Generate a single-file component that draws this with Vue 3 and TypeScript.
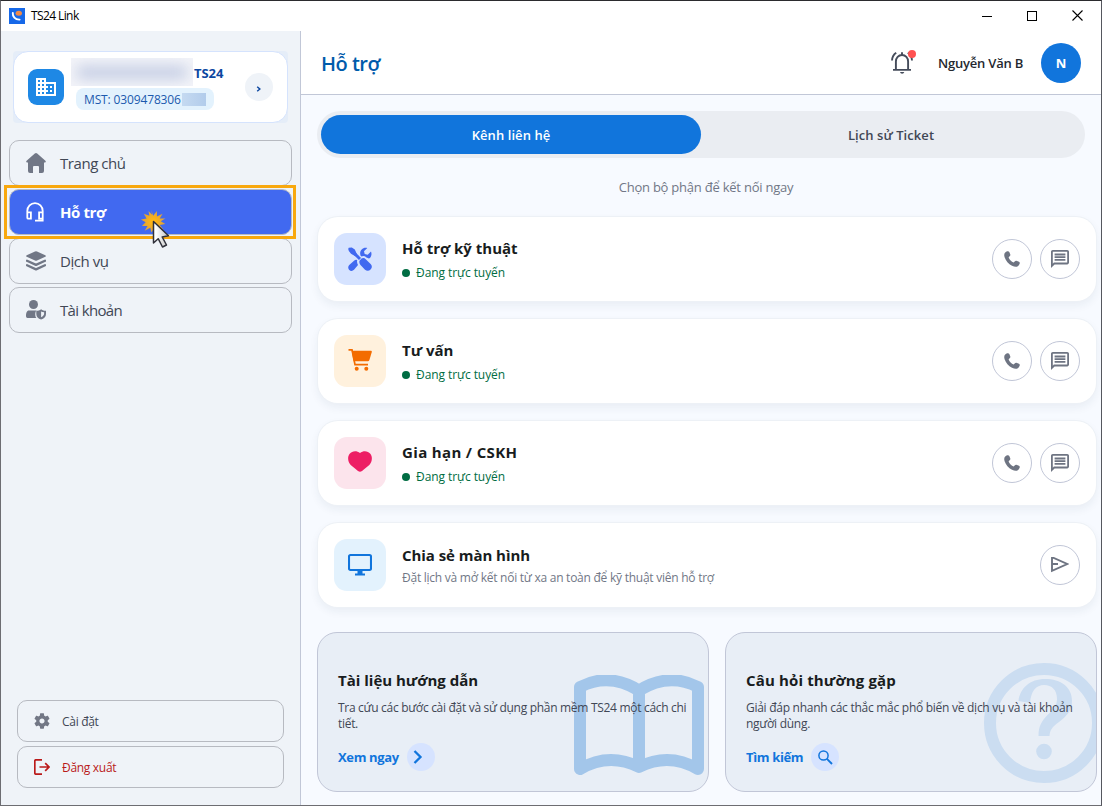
<script setup lang="ts">
import { ref } from 'vue'

interface NavItem { id: string; label: string }
interface Channel { id: string; title: string; note: string; online: boolean; actions: string[] }

const active = ref('support')
const tab = ref('channels')

const nav: NavItem[] = [
  { id: 'home', label: 'Trang chủ' },
  { id: 'support', label: 'Hỗ trợ' },
  { id: 'services', label: 'Dịch vụ' },
  { id: 'account', label: 'Tài khoản' },
]

const channels: Channel[] = [
  { id: 'tech', title: 'Hỗ trợ kỹ thuật', note: 'Đang trực tuyến', online: true, actions: ['call', 'chat'] },
  { id: 'sales', title: 'Tư vấn', note: 'Đang trực tuyến', online: true, actions: ['call', 'chat'] },
  { id: 'care', title: 'Gia hạn / CSKH', note: 'Đang trực tuyến', online: true, actions: ['call', 'chat'] },
  { id: 'screen', title: 'Chia sẻ màn hình', note: 'Đặt lịch và mở kết nối từ xa an toàn để kỹ thuật viên hỗ trợ', online: false, actions: ['send'] },
]
</script>

<template>
  <div class="window">
    <header class="titlebar">
      <svg class="app-logo" viewBox="0 0 16 16">
        <rect width="16" height="16" fill="#1668e8" />
        <path d="M3.800 5C3.500 8.300 6 11.800 10.600 11.600" fill="none" stroke="#fff" stroke-width="1.900" stroke-linecap="round" />
        <ellipse cx="9.800" cy="5.200" rx="3.200" ry="2.500" fill="#f08a48" />
      </svg>
      <span class="app-name">TS24 Link</span>
      <div class="controls">
        <svg width="10" height="10" viewBox="0 0 10 10" shape-rendering="crispEdges"><rect y="5" width="10" height="1" /></svg>
        <svg width="10" height="10" viewBox="0 0 10 10" shape-rendering="crispEdges"><rect x=".5" y=".5" width="9" height="9" fill="none" stroke="#000" /></svg>
        <svg width="11" height="11" viewBox="0 0 11 11"><path d="M.5.5l10 10M10.500.5l-10 10" stroke="#000" stroke-width="1.100" /></svg>
      </div>
    </header>

    <div class="body">
      <aside class="sidebar">
        <section class="company-wrap">
          <div class="company">
            <div class="company-icon">
              <svg width="24" height="24" viewBox="0 0 24 24" fill="#fff"><path d="M12 7V3H2v18h20V7H12zM6 19H4v-2h2v2zm0-4H4v-2h2v2zm0-4H4V9h2v2zm0-4H4V5h2v2zm4 12H8v-2h2v2zm0-4H8v-2h2v2zm0-4H8V9h2v2zm0-4H8V5h2v2zm10 12h-8v-2h2v-2h-2v-2h2v-2h-2V9h8v10zm-2-8h-2v2h2v-2zm0 4h-2v2h2v-2z" /></svg>
            </div>
            <div class="company-info">
              <div class="company-name"><span class="redacted"><i></i></span><b>TS24</b></div>
              <div class="tax"><span>MST: 0309478306</span><i></i></div>
            </div>
            <button class="company-go">
              <svg width="6" height="6" viewBox="0 0 6 6"><path d="M1.200.8L3.800 3 1.200 5.200" fill="none" stroke="#0d47a1" stroke-width="1.500" /></svg>
            </button>
          </div>
        </section>

        <nav class="nav">
          <button v-for="item in nav" :key="item.id" class="nav-item" :class="[item.id, { active: active === item.id }]" @click="active = item.id">
            <svg v-if="item.id === 'home'" class="nav-icon" viewBox="0 0 20 20">
              <path d="M8.800.5Q10-.4 11.200.5L19.400 7.800Q20.400 9.300 18.900 9.600H18V18Q18 20 16 20H13V14Q13 13 12 13H8Q7 13 7 14V20H4Q2 20 2 18V9.600H1.100Q-.4 9.300.6 7.800Z" fill="currentColor" />
            </svg>
            <svg v-else-if="item.id === 'support'" class="nav-icon headset" viewBox="0 0 20 20">
              <path d="M1.300 15V9a7.700 7.900 0 0 1 15.400 0V18.700H9M1.300 10.400H4.900V16.700H2.300Q1.300 16.700 1.300 15.700ZM16.700 10.400H13.100V16.700H16.700" fill="none" stroke="currentColor" stroke-width="1.800" />
            </svg>
            <svg v-else-if="item.id === 'services'" class="nav-icon" viewBox="0 0 20 20">
              <path d="M9 .4Q10-.1 11 .4L19.300 4.200Q20.500 5 19.300 5.800L11 9.600Q10 10 9 9.600L.7 5.800Q-.5 5 .7 4.200Z" fill="currentColor" />
              <path d="M1 9.800L10 13.900 19 9.800M1 14.200L10 18.400 19 14.200" fill="none" stroke="currentColor" stroke-width="2.300" stroke-linecap="round" stroke-linejoin="round" />
            </svg>
            <svg v-else class="nav-icon" viewBox="0 0 20 20" fill="currentColor">
              <circle cx="7.500" cy="4.500" r="4.500" /><path d="M3 10.500h7.500C9.200 11.500 9 14.500 9.500 16.500c.3.700.6 1.200 1 1.500H1.500Q0 18 0 16.300C0 13 .7 10.500 3 10.500Z" />
              <path fill-rule="evenodd" d="M15.100 9.200c1.500 1.300 2.900 1.500 4.900 1.500v3.200c0 2.800-2 4.500-4.900 5.700-2.900-1.200-4.800-2.900-4.800-5.700v-3.200c2 0 3.400-.2 4.800-1.500ZM15.100 11.500v5.800c2-1 3-2 3-3.700v-1.300c-1.200 0-2.200-.200-3-.8Z" />
            </svg>
            <span>{{ item.label }}</span>
          </button>
          <div class="focus-frame"></div>
          <svg class="pointer" width="30" height="39" viewBox="0 0 30 39">
            <defs>
              <linearGradient id="ptr"><stop offset=".15" stop-color="#fff" /><stop offset="1" stop-color="#c4c4c4" /></linearGradient>
              <radialGradient id="burst"><stop offset=".2" stop-color="#ffb515" /><stop offset="1" stop-color="#d9a040" /></radialGradient>
            </defs>
            <path d="M12 0l2 6 4-5v6l6-3-3 5 6 0-5 3 5 3-6 1 4 5-6-2 0 5-4-4-3 4-1-5-6 3 3-5-6 0 4-4-5-3 6-1-3-5 6 2-1-5 4 4Z" transform="translate(-1 0) scale(.94)" fill="url(#burst)" />
            <path d="M12.500 11.500V33l4.700-4.300 4.300 8.300 4-2-4.300-8 6.300-1.200Z" fill="url(#ptr)" stroke="#30313b" stroke-width="1.500" stroke-linejoin="round" />
          </svg>
        </nav>

        <div class="bottom">
          <button class="low-item">
            <svg width="16" height="16" viewBox="2 2 20 20" fill="#727785"><path d="M19.140 12.940c.04-.3.060-.610.060-.940 0-.320-.020-.640-.070-.940l2.030-1.580c.180-.140.230-.410.120-.610l-1.920-3.320c-.120-.220-.370-.290-.590-.220l-2.390.960c-.500-.380-1.030-.700-1.620-.940l-.360-2.540c-.040-.240-.240-.410-.480-.410h-3.840c-.240 0-.430.170-.470.410l-.360 2.540c-.590.240-1.130.570-1.620.940l-2.390-.960c-.220-.080-.470 0-.590.220L2.740 8.870c-.120.210-.080.470.120.610l2.030 1.580c-.050.300-.090.630-.090.940s.020.640.070.940l-2.030 1.580c-.180.140-.230.410-.120.610l1.920 3.320c.120.220.370.290.590.220l2.390-.960c.500.380 1.030.700 1.620.940l.360 2.540c.050.240.240.410.480.410h3.840c.240 0 .440-.170.470-.410l.360-2.540c.590-.240 1.130-.560 1.620-.940l2.390.960c.220.080.470 0 .590-.220l1.920-3.320c.120-.220.070-.470-.120-.610l-2.010-1.580zM12 15.200c-1.800 0-3.200-1.400-3.200-3.200s1.400-3.200 3.200-3.200 3.200 1.400 3.200 3.200-1.400 3.200-3.200 3.200z" /></svg>
            <span>Cài đặt</span>
          </button>
          <button class="low-item logout">
            <svg width="16" height="16" viewBox="0 0 16 16" fill="none" stroke="#ba1a1a" stroke-width="1.700"><path d="M8 .8H2Q.8.8.8 2v12q0 1.200 1.200 1.200H8M5.500 8H14.500M11.200 4.200L15 8l-3.800 3.800" /></svg>
            <span>Đăng xuất</span>
          </button>
        </div>
      </aside>

      <main class="main">
        <header class="topbar">
          <h1>Hỗ trợ</h1>
          <div class="user">
            <div class="bell">
              <svg width="22" height="24" viewBox="0 0 22 24">
                <path d="M4.900 18.500V10.500C4.900 6.800 7.500 4 11 4s6.100 2.800 6.100 6.500V18.500M2 18.900H20M11 4V1.300M1 9.500C1.200 6 2.700 3.500 5.200 1.800M21 9.500C20.800 6 19.300 3.500 16.800 1.800" fill="none" stroke="#454c5b" stroke-width="1.900" />
                <path d="M9 21h4.300a2.200 2.200 0 0 1-4.300 0Z" fill="#454c5b" />
              </svg>
              <i></i>
            </div>
            <span class="user-name">Nguyễn Văn B</span>
            <span class="avatar">N</span>
          </div>
        </header>

        <div class="content">
          <div class="tabs">
            <button class="t1" :class="{ on: tab === 'channels' }" @click="tab = 'channels'"><span>Kênh liên hệ</span></button>
            <button class="t2" :class="{ on: tab === 'history' }" @click="tab = 'history'"><span>Lịch sử Ticket</span></button>
          </div>
          <p class="hint">Chọn bộ phận để kết nối ngay</p>

          <div class="channels">
            <article v-for="c in channels" :key="c.id" class="channel" :class="c.id">
              <div class="tile">
                <svg v-if="c.id === 'tech'" width="24" height="24" viewBox="0 0 24 24">
                  <path d="M2.700 2.700L12 12" stroke="#4169f0" stroke-width="3" />
                  <path d="M.7.8L3.800.5 6.800 2.500 8.400 6 9.200 7.500 7.300 9.300 3 6.700Q-.8 3 .7.8Z" fill="#4169f0" />
                  <path d="M11.500 13.700L13.500 11.500Q16 10.300 18 12.500L22.600 17Q25 19.500 22.800 22.200 20 25 17 22.700L12.500 18Q10.800 16 11.500 13.700Z" fill="#4169f0" />
                  <path d="M9.300 12.900Q7.500 12.200 6.300 13.400L1.500 17.800Q-.8 20 1 22.700 3.600 25 6 22.800L10 17.900Q8.500 15.300 9.300 12.900Z" fill="#4169f0" />
                  <path d="M12.500 8.500C11 3.800 14.600-.3 19.300.9L16 4.200 16.700 7 19.700 7.700 23 4.500C24.300 7.800 22.700 11 21 11.600L18.500 10.400Q15.800 8 13.500 9.500Z" fill="#4169f0" />
                </svg>
                <svg v-else-if="c.id === 'sales'" width="24" height="24" viewBox="0 1 24 24">
                  <path d="M.5 1.900H4L7 16.600H20" fill="none" stroke="#f36c00" stroke-width="1.700" />
                  <path d="M3.700 2.800H23Q24 2.800 23.800 4L21.400 12Q21 13.300 19.800 13.300H5.600Z" fill="#f36c00" />
                  <circle cx="8.700" cy="20.800" r="2" fill="#f36c00" /><circle cx="18.300" cy="20.800" r="2" fill="#f36c00" />
                </svg>
                <svg v-else-if="c.id === 'care'" width="24" height="24" viewBox="0 1.500 24 24">
                  <path d="M12 3.500C8.500.8 4 1.400 1.700 4.300-.8 7.300-.2 12.200 2.700 15.500L10 21.500Q12 23 14 21.500l7.300-6c2.900-3.300 3.500-8.200 1-11.200C20 1.400 15.500.8 12 3.500Z" fill="#ed1e64" />
                </svg>
                <svg v-else width="24" height="24" viewBox="0 1 24 24">
                  <rect x="1" y="3" width="22" height="15" rx="1.400" fill="none" stroke="#1175dc" stroke-width="2.100" /><path d="M9.500 18h5v3.500H17V23.500H7V21.500h2.500Z" fill="#1175dc" />
                </svg>
              </div>
              <div class="info">
                <h2>{{ c.title }}</h2>
                <p :class="c.online ? 'status' : 'desc'"><i v-if="c.online"></i><span>{{ c.note }}</span></p>
              </div>
              <div class="actions">
                <button v-for="a in c.actions" :key="a">
                  <svg v-if="a === 'call'" width="16" height="16" viewBox="0 0 16 16"><path d="M1.200 1.600C2.600.2 4.600-.3 5.300 1L6.300 3.600C6.700 4.800 5 5.600 4.600 6.400 5.300 8.400 7.600 10.600 9.600 11.400 10.400 11 11.200 9.400 12.400 9.800L15 10.800C16.300 11.500 15.800 13.400 14.400 14.800 13.400 15.900 11 16.200 8 14.800 4.500 13 1.800 9.800.6 6.200-.1 4 .2 2.600 1.200 1.600Z" fill="#6e7482" /></svg>
                  <svg v-else-if="a === 'chat'" width="18" height="18" viewBox="2 2 20 20"><path d="M4 4h16v12H5.170L4 17.170V4m0-2c-1.100 0-1.990.9-1.990 2L2 22l4-4h14c1.100 0 2-.9 2-2V4c0-1.100-.9-2-2-2H4zm2 10h12v2H6v-2zm0-3h12v2H6V9zm0-3h12v2H6V6z" fill="#6e7482" /></svg>
                  <svg v-else width="18" height="16" viewBox="0 1 18 16"><path d="M1 1.200L16.200 8 1 14.800ZM1 8H7" fill="none" stroke="#6e7482" stroke-width="1.900" /></svg>
                </button>
              </div>
            </article>
          </div>

          <div class="help">
            <article class="help-card docs">
              <svg class="art book" width="130" height="101" viewBox="0 0 130 101">
                <path d="M6 94V12Q35-3 65 15.500V92Q35 77 6 94ZM65 15.500Q95-3 124 12V94Q95 77 65 92" fill="none" stroke="#a3c6ea" stroke-width="12" stroke-linejoin="round" />
              </svg>
              <h2>Tài liệu hướng dẫn</h2>
              <p>Tra cứu các bước cài đặt và sử dụng phần mềm TS24 một cách chi<br>tiết.</p>
              <a><span>Xem ngay</span><i><svg width="10" height="14" viewBox="0 0 10 14"><path d="M1.500 1L7.500 7l-6 6" fill="none" stroke="#1175dc" stroke-width="2.300" /></svg></i></a>
            </article>
            <article class="help-card faq">
              <svg class="art question" width="120" height="120" viewBox="0 0 120 120">
                <circle cx="60" cy="60" r="54" fill="none" stroke="#cbddf1" stroke-width="12" />
                <path d="M34.500 38C36 25 46 16 61 16c16 0 27 8 27 22 0 9-5 15-13 21-7 5-9 8-9.500 14H54.500c0-10 3-15 10-22 6-6 8.500-9 8.500-15 0-9-5-14-13-14-8 0-13 6-14 18Z" fill="#cbddf1" />
                <circle cx="60" cy="88.500" r="7.800" fill="#cbddf1" />
              </svg>
              <h2>Câu hỏi thường gặp</h2>
              <p>Giải đáp nhanh các thắc mắc phổ biến về dịch vụ và tài khoản<br>người dùng.</p>
              <a><span>Tìm kiếm</span><i><svg width="15" height="15" viewBox="0 0 15 15"><circle cx="5.500" cy="5.500" r="4.600" fill="none" stroke="#1175dc" stroke-width="1.500" /><path d="M8.700 8.700l5.300 5.300" stroke="#1175dc" stroke-width="1.900" /></svg></i></a>
            </article>
          </div>
        </div>
      </main>
    </div>
  </div>
</template>

<style>
html, body { margin: 0; overflow: hidden; }
</style>

<style scoped>
* { box-sizing: border-box; }
.window { width: 1102px; height: 806px; display: flex; flex-direction: column; background: #fff; border: 1px solid #6d6d72; border-top-color: #2b2b2e; border-right-color: #55575e; font-family: "Open Sans", "Noto Sans", sans-serif; color: #181c23; overflow: hidden; }
button { font: inherit; letter-spacing: inherit; margin: 0; padding: 0; border: 0; background: none; color: inherit; }
h1, h2, p { margin: 0; }
svg { display: block; flex: none; }
span, h1, h2, p { white-space: nowrap; }
.titlebar { height: 30px; flex: none; display: flex; align-items: center; padding: 0 18px 1px 8px; color: #000; }
.app-logo { width: 16px; height: 16px; margin-right: 6px; }
.app-name { font-size: 12px; letter-spacing: -.6px; }
.controls { margin-left: auto; display: flex; align-items: center; gap: 35px; }
.body { flex: 1; display: flex; min-height: 0; }
.sidebar { width: 300px; flex: none; background: #eff3f8; border-right: 1px solid #c1c7d7; display: flex; flex-direction: column; padding: 20px 8px 17px 8px; }
.company-wrap { margin: 0 4px; background: #e5edf8; height: 72px; border-radius: 4px; }
.company { height: 72px; background: #fff; border: 1px solid #d5e3fd; border-radius: 15px; display: flex; align-items: center; padding: 0 14px; }
.company-icon { width: 36px; height: 36px; border-radius: 9px; background: #1e88e5; display: flex; align-items: center; justify-content: center; }
.company-info { margin-left: 7px; height: 72px; padding-top: 7px; }
.company-name { display: flex; height: 28px; align-items: center; color: #0d47a1; font-size: 13px; }
.company-name b { letter-spacing: -.05px; margin-left: 1px; padding-top: 1px; }
.redacted { width: 122px; height: 28px; background: #f3f4f9; overflow: hidden; display: flex; align-items: center; justify-content: center; }
.redacted i { width: 112px; height: 13px; border-radius: 6px; background: #c3cce3; filter: blur(7px); }
.tax { margin: 2px 0 0 5px; height: 22px; width: 138px; border-radius: 8px; background: #e3f2fd; color: #1c5aae; font-size: 12px; display: flex; align-items: center; padding-left: 8px; }
.tax span { width: 98px; letter-spacing: -.14px; }
.tax i { width: 24px; height: 13px; background: linear-gradient(90deg, #c5daf1, #b2cceb); }
.company-go { width: 28px; height: 28px; border-radius: 50%; background: #eff3f8; margin-left: auto; padding-top: 3px; display: flex; align-items: center; justify-content: center; }
.nav { position: relative; display: flex; flex-direction: column; gap: 3px; margin-top: 17px; }
.nav-item { height: 46px; border: 1px solid #b7bac1; border-radius: 10px; display: flex; align-items: center; padding-left: 16px; color: #414755; font-size: 15px; letter-spacing: -.45px; text-align: left; }
.nav-icon { width: 20px; height: 20px; margin-right: 14px; color: #717786; }
.nav-item.active { background: #4169f0; color: #fff; font-weight: 700; letter-spacing: -.4px; }
.nav-item.active .nav-icon { color: #fff; }
.nav-item.account { letter-spacing: -.65px; }
.focus-frame { position: absolute; left: -5px; top: 45px; width: 292px; height: 54px; border: 3px solid #f8a80e; }
.pointer { position: absolute; left: 132px; top: 70px; overflow: visible; }
.bottom { margin: auto 8px 0; display: flex; flex-direction: column; gap: 4px; }
.low-item { height: 42px; border: 1px solid #b7bac1; border-radius: 10px; display: flex; align-items: center; padding-left: 16px; gap: 12px; font-size: 12px; letter-spacing: -.3px; color: #414755; }
.low-item.logout { color: #ba1a1a; }
.main { flex: 1; min-width: 0; display: flex; flex-direction: column; background: #f7faff; }
.topbar { height: 64px; flex: none; background: #fff; border-bottom: 1px solid #c1c7d7; display: flex; align-items: center; justify-content: space-between; padding: 0 20px 0 20px; }
h1 { font-size: 20px; font-weight: 650; color: #005bab; letter-spacing: -.5px; padding-top: 2px; }
.user { display: flex; align-items: center; }
.bell { position: relative; width: 22px; height: 24px; margin-right: 25px; }
.bell i { position: absolute; right: -3px; top: -1px; width: 8px; height: 8px; border-radius: 50%; background: #ff5252; }
.user-name { width: 87px; margin-right: 16px; font-size: 13px; font-weight: 650; letter-spacing: -.2px; color: #24282f; }
.avatar { width: 40px; height: 40px; border-radius: 50%; background: #1175dc; color: #fff; font-size: 13px; font-weight: 700; display: flex; align-items: center; justify-content: center; }
.content { padding: 16px 4px 0 16px; }
.tabs { width: 768px; height: 47px; border-radius: 24px; background: #eaedf2; padding: 4px; display: flex; }
.tabs button { flex: 1; border-radius: 20px; font-size: 13px; font-weight: 600; letter-spacing: .07px; color: #414755; }
.tabs button.on { background: #1175dc; color: #fff; }
.hint { height: 20px; line-height: 20px; margin: 19px 2px 0 0; text-align: center; font-size: 13px; color: #717786; letter-spacing: -.23px; }
.channels { margin: 20px 1px 0 1px; display: flex; flex-direction: column; gap: 18px; }
.channel { height: 84px; background: #fff; border-radius: 20px; box-shadow: 0 0 0 1px #edf1f6, 0 4px 10px rgba(30, 50, 80, .07); display: flex; align-items: center; padding: 0 16px; }
.tile { width: 52px; height: 52px; border-radius: 13px; display: flex; align-items: center; justify-content: center; background: #d6e3ff; }
.sales .tile { background: #fff1dd; }
.care .tile { background: #fce4ec; }
.screen .tile { background: #e3f2fd; }
.info { margin-left: 16px; }
h2 { font-size: 15px; line-height: 22px; font-weight: 700; color: #181c20; }
.care h2 { letter-spacing: .35px; }
.faq h2 { letter-spacing: .15px; }
.info p { margin-top: 5px; line-height: 18px; font-size: 12px; letter-spacing: -.07px; display: flex; align-items: center; gap: 6px; }
.status { color: #006d43; }
.status i { width: 8px; height: 8px; border-radius: 50%; background: #006d43; }
.info .desc { color: #717786; letter-spacing: -.25px; margin-top: 3px; }
.screen h2 { letter-spacing: -.05px; }
.actions { margin-left: auto; display: flex; gap: 8px; }
.actions button { width: 40px; height: 40px; border: 1px solid #c1c6d7; border-radius: 50%; display: flex; align-items: center; justify-content: center; }
.help { display: flex; gap: 16px; margin-top: 25px; }
.help-card { position: relative; height: 160px; width: 372px; border: 1px solid #c1c6d7; border-radius: 20px; background: #e8eef6; padding: 36px 20px 0; overflow: hidden; }
.help-card.docs { width: 392px; }
.art { position: absolute; }
.book { left: 256px; top: 42px; }
.question { left: 258px; top: 30px; }
.help-card h2, .help-card p, .help-card a { position: relative; }
.help-card p { margin-top: 9px; font-size: 12px; line-height: 16px; color: #414755; letter-spacing: -.3px; }
.help-card.faq p { letter-spacing: -.27px; }
.help-card a { display: flex; align-items: center; height: 28px; margin-top: 11px; font-size: 13px; font-weight: 700; letter-spacing: -.36px; color: #1175dc; }
.help-card a i { width: 28px; height: 28px; border-radius: 50%; background: #d6e3ff; margin-left: 8px; display: flex; align-items: center; justify-content: center; }
.help-card.docs a i { padding-right: 5px; }
</style>
